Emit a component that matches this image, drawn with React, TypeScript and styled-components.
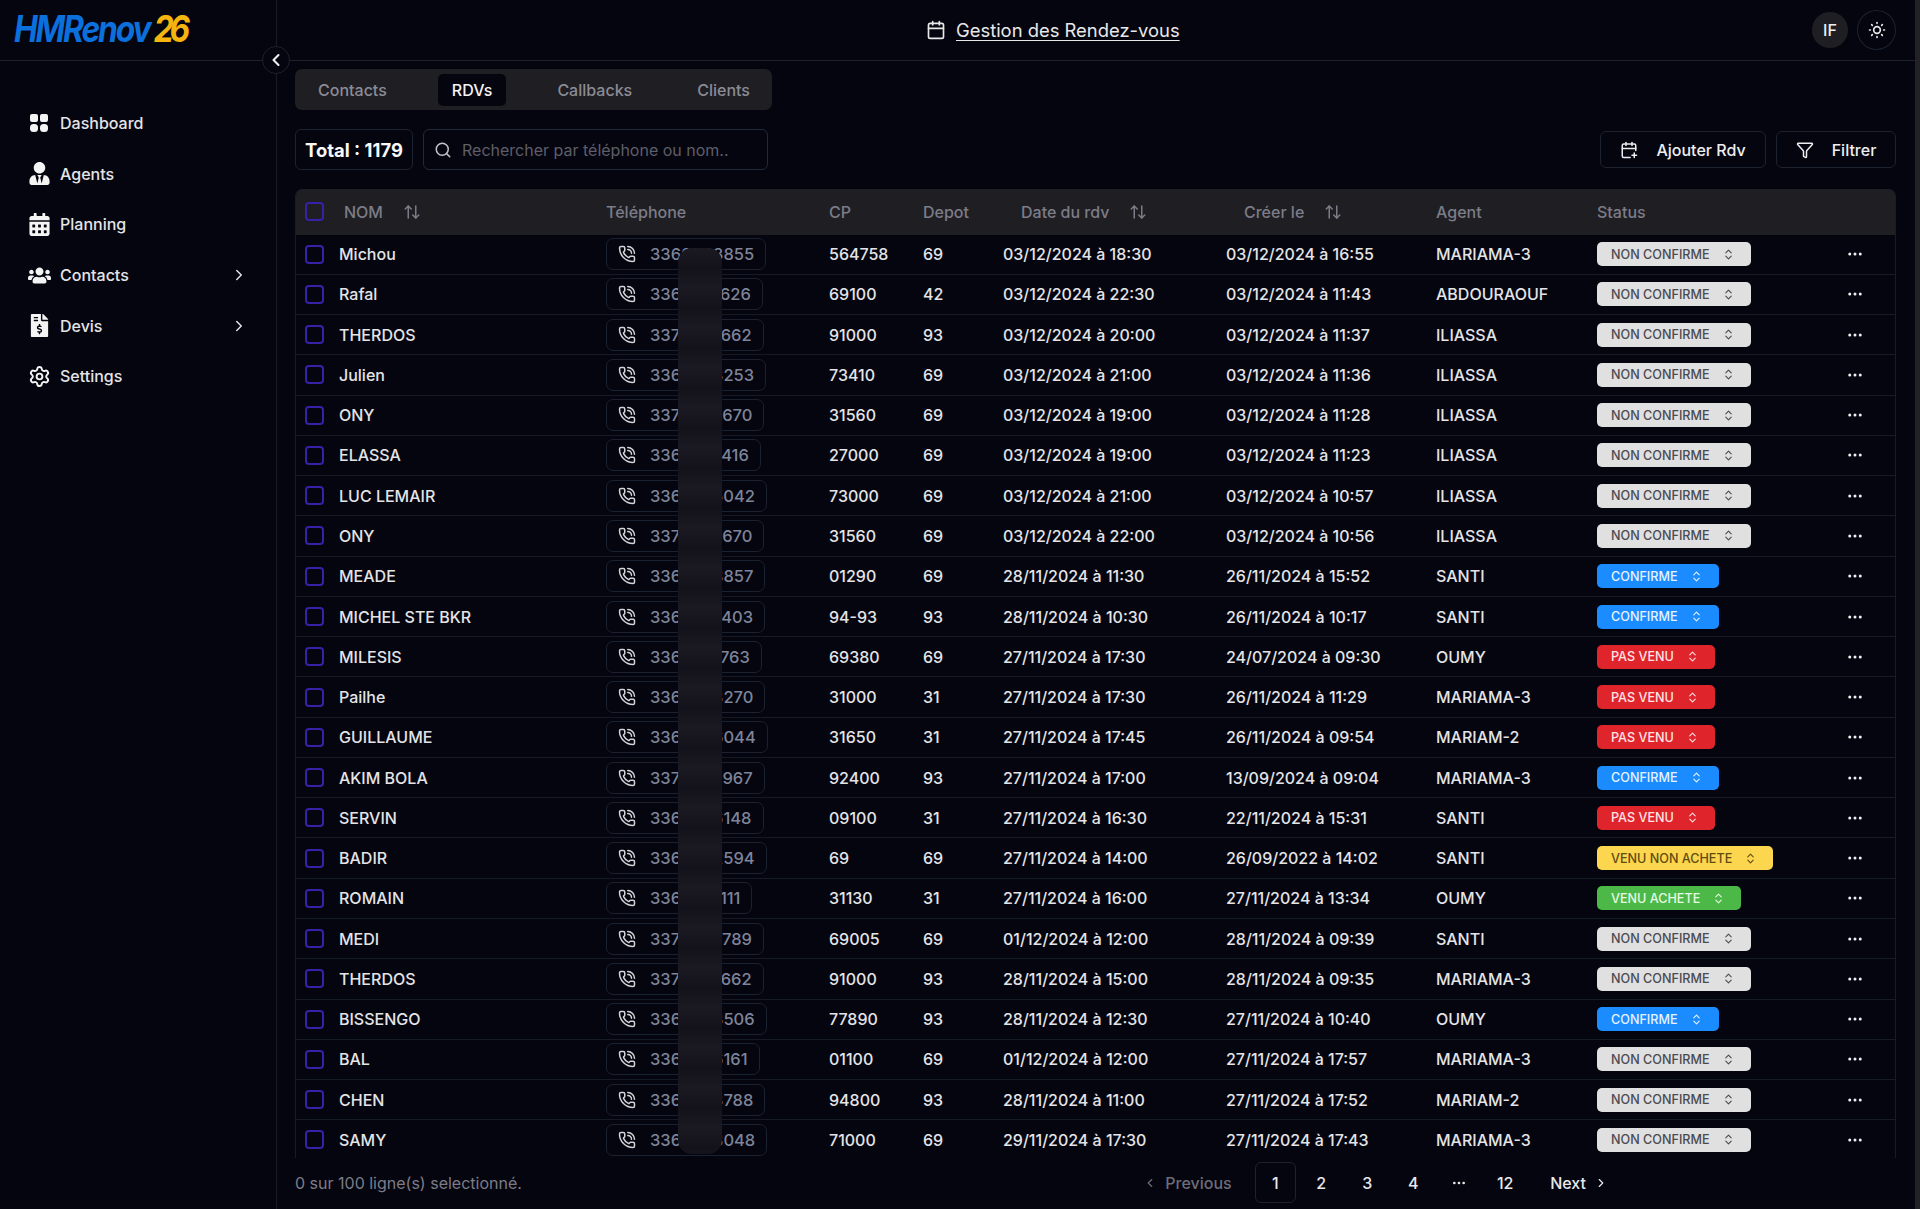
import React from "react";
import styled, { createGlobalStyle } from "styled-components";
import {
  ArrowUpDown,
  Calendar,
  CalendarPlus,
  ChevronLeft,
  ChevronRight,
  ChevronsUpDown,
  Ellipsis,
  Funnel,
  PhoneCall,
  Search,
  Settings,
  SunMedium,
} from "lucide-react";
import { FaCalendarAlt, FaFileInvoiceDollar, FaUsers, FaUserTie } from "react-icons/fa";

const GlobalStyle = createGlobalStyle`
  html, body { margin: 0; padding: 0; height: 100%; background: #05050f; }
  body { font-family: Inter, "Liberation Sans", sans-serif; color: #e4e4e7; overflow: hidden; }
  * { box-sizing: border-box; }
`;

const Shell = styled.div`
  display: flex;
  height: 100vh;
  position: relative;
`;

const Sidebar = styled.aside`
  width: 277px;
  flex-shrink: 0;
  border-right: 1px solid #171c28;
  display: flex;
  flex-direction: column;
`;

const LogoBar = styled.div`
  height: 61px;
  border-bottom: 1px solid #1c2230;
  padding: 7px 0 0 14px;
  line-height: 44px;
`;

const Logo = styled.div`
  display: inline-block;
  white-space: nowrap;
  font-size: 37px;
  font-weight: 700;
  font-style: italic;
  letter-spacing: -2.5px;
  transform: scaleX(0.86);
  transform-origin: left center;
`;

const LogoBlue = styled.span`
  color: #0b6fdc;
`;

const LogoYellow = styled.span`
  color: #f6b40e;
  margin-left: 5px;
  letter-spacing: -5px;
`;

const Collapse = styled.button`
  position: absolute;
  left: 262px;
  top: 46px;
  width: 28px;
  height: 28px;
  border-radius: 50%;
  border: 1px solid #1c2230;
  background: #05050f;
  color: #f0f0f2;
  display: flex;
  align-items: center;
  justify-content: center;
  padding: 0;
`;

const Nav = styled.nav`
  display: flex;
  flex-direction: column;
  gap: 14.7px;
  padding: 44px 0 0 24px;
`;

const NavItem = styled.a`
  height: 36px;
  display: flex;
  align-items: center;
  color: #e4e4e7;
  font-size: 16px;
  font-weight: 500;
  padding-right: 28px;
`;

const NavIcon = styled.span`
  width: 30px;
  margin-right: 6px;
  flex-shrink: 0;
  display: flex;
  align-items: center;
  justify-content: center;
  color: #f4f4f5;
`;

const NavLabel = styled.span`
  flex: 1;
`;

const Main = styled.main`
  flex: 1;
  min-width: 0;
  display: flex;
  flex-direction: column;
`;

const Header = styled.header`
  height: 61px;
  flex-shrink: 0;
  border-bottom: 1px solid #1c2230;
  display: flex;
  align-items: center;
  padding: 0 19px 0 649px;
`;

const Title = styled.div`
  display: flex;
  align-items: center;
  gap: 10px;
  font-size: 18.4px;
  color: #e8e8ea;
  flex: 1;
`;

const TitleLink = styled.span`
  text-decoration: underline;
  text-underline-offset: 3px;
`;

const Avatar = styled.div`
  width: 36px;
  height: 36px;
  border-radius: 50%;
  background: #1f1f23;
  display: flex;
  align-items: center;
  justify-content: center;
  font-size: 16px;
  font-weight: 500;
  color: #f0f0f2;
  margin-right: 9px;
`;

const ThemeButton = styled.button`
  width: 39px;
  height: 40px;
  border-radius: 50%;
  border: 1px solid #1c2230;
  background: transparent;
  color: #e8e8ea;
  display: flex;
  align-items: center;
  justify-content: center;
  padding: 0;
`;

const Content = styled.div`
  flex: 1;
  min-height: 0;
  display: flex;
  flex-direction: column;
  padding: 8px 19px 0 18px;
`;

const Tabs = styled.div`
  width: 477px;
  height: 41px;
  flex-shrink: 0;
  background: #1f1f23;
  border-radius: 7px;
  display: flex;
  align-items: center;
  gap: 37px;
  padding: 0 9px;
`;

const Tab = styled.div<{ $active?: boolean }>`
  height: 32px;
  padding: 0 14px;
  border-radius: 5px;
  display: flex;
  align-items: center;
  font-size: 16px;
  font-weight: 500;
  color: ${({ $active }) => ($active ? "#f4f4f5" : "#8b8b96")};
  background: ${({ $active }) => ($active ? "#05050f" : "transparent")};
`;

const Toolbar = styled.div`
  display: flex;
  align-items: center;
  flex-shrink: 0;
  height: 41px;
  margin: 19px 0;
`;

const TotalBox = styled.div`
  width: 118px;
  height: 41px;
  border: 1px solid #1c2230;
  border-radius: 6px;
  display: flex;
  align-items: center;
  justify-content: center;
  font-size: 18.4px;
  font-weight: 700;
  color: #f8f8f9;
  margin-right: 10px;
`;

const SearchBox = styled.div`
  width: 345px;
  height: 41px;
  border: 1.5px solid #1f2a3a;
  border-radius: 6px;
  display: flex;
  align-items: center;
  gap: 10px;
  padding-left: 10px;
  font-size: 16px;
  color: #5e5e68;
`;

const SearchIcon = styled(Search)`
  color: #c4c4c8;
  flex-shrink: 0;
`;

const ToolButton = styled.button<{ $width: number }>`
  width: ${({ $width }) => $width}px;
  height: 37px;
  border: 1px solid #1c2230;
  border-radius: 6px;
  background: transparent;
  color: #eeeef0;
  display: flex;
  align-items: center;
  justify-content: center;
  gap: 18px;
  font-family: inherit;
  font-size: 16px;
  font-weight: 500;
  margin-left: 10px;
  padding: 0;
`;

const Spacer = styled.div`
  flex: 1;
`;

const TableWrap = styled.div`
  flex: 1;
  min-height: 0;
  position: relative;
  overflow: hidden;
  border-left: 1px solid #171c28;
  border-right: 1px solid #171c28;
  border-radius: 7px 7px 0 0;
`;

const COLUMNS = "43px 267px 223px 94px 80px 223px 210px 161px 240px 1fr";

const HeadRow = styled.div`
  display: grid;
  grid-template-columns: ${COLUMNS};
  align-items: center;
  height: 45.5px;
  background: #1f1f23;
  font-size: 16px;
  font-weight: 500;
  color: #7c7c88;
`;

const HeadCell = styled.div<{ $pad?: number }>`
  display: flex;
  align-items: center;
  gap: 20px;
  padding-left: ${({ $pad }) => $pad ?? 0}px;
`;

const Row = styled.div`
  display: grid;
  grid-template-columns: ${COLUMNS};
  align-items: center;
  height: 40.27px;
  border-bottom: 1px solid #141a26;
  font-size: 16px;
  color: #e4e4e7;
  font-weight: 500;
`;

const CheckCell = styled.div`
  padding-left: 9px;
  display: flex;
  align-items: center;
`;

const Check = styled.span`
  width: 19px;
  height: 19px;
  border: 2px solid #3820a8;
  border-radius: 4px;
  display: block;
`;

const PhonePill = styled.div`
  height: 32px;
  width: max-content;
  padding: 0 11px;
  border: 1px solid #1a2130;
  border-radius: 7px;
  display: flex;
  align-items: center;
  gap: 14px;
  font-size: 16.5px;
  color: #7e8499;
  font-weight: 500;
`;

const PhoneIcon = styled(PhoneCall)`
  color: #d4d4d8;
  flex-shrink: 0;
`;

const STATUS_COLORS: Record<string, { bg: string; fg: string }> = {
  "NON CONFIRME": { bg: "#e0e0e0", fg: "#4b4b50" },
  CONFIRME: { bg: "#1a8cff", fg: "#e6f3ff" },
  "PAS VENU": { bg: "#e0242c", fg: "#ffe4e4" },
  "VENU NON ACHETE": { bg: "#fdd64f", fg: "#5e4c10" },
  "VENU ACHETE": { bg: "#4cb848", fg: "#e6fae4" },
};

const StatusPill = styled.div<{ $status: string }>`
  height: 24px;
  width: max-content;
  padding: 0 16px 0 14px;
  border-radius: 5px;
  display: flex;
  align-items: center;
  gap: 12px;
  font-size: 12.6px;
  font-weight: 500;
  background: ${({ $status }) => STATUS_COLORS[$status].bg};
  color: ${({ $status }) => STATUS_COLORS[$status].fg};
`;

const ActionCell = styled.div`
  display: flex;
  padding-left: 9px;
  color: #f0f0f2;
`;

const Blur = styled.div`
  position: absolute;
  left: 382px;
  top: 59px;
  width: 44px;
  height: 906px;
  border-radius: 14px;
  background: repeating-linear-gradient(180deg, #1b1a23 0, #13121a 20px, #1b1a23 40px);
`;

const Footer = styled.footer`
  height: 51px;
  flex-shrink: 0;
  display: flex;
  align-items: center;
  justify-content: space-between;
  padding: 0 288px 2px 0;
  font-size: 16px;
  color: #7c7c88;
`;

const Pagination = styled.div`
  display: flex;
  align-items: center;
  gap: 5px;
  font-weight: 500;
  color: #e8e8ea;
`;

const PrevLink = styled.span`
  display: flex;
  align-items: center;
  gap: 8px;
  margin-right: 18px;
  color: #6d6d78;
`;

const NextLink = styled.span`
  display: flex;
  align-items: center;
  gap: 8px;
  margin-left: 19.5px;
  color: #e8e8ea;
`;

const PageLink = styled.span<{ $active?: boolean }>`
  width: 41px;
  height: 41px;
  display: flex;
  align-items: center;
  justify-content: center;
  border-radius: 6px;
  border: 1px solid ${({ $active }) => ($active ? "#1c2230" : "transparent")};
`;

const ScrollTrack = styled.div`
  width: 5px;
  flex-shrink: 0;
  background: #222226;
`;

const DashboardIcon = () => (
  <svg width="18" height="18" viewBox="0 0 18 18" fill="currentColor">
    <rect x="0" y="0" width="8" height="8" rx="2" />
    <rect x="10" y="0" width="8" height="8" rx="2" />
    <rect x="0" y="10" width="8" height="8" rx="3.5" />
    <rect x="10" y="10" width="8" height="8" rx="3.5" />
  </svg>
);

const NAV = [
  { label: "Dashboard", icon: <DashboardIcon /> },
  { label: "Agents", icon: <FaUserTie size={23} /> },
  { label: "Planning", icon: <FaCalendarAlt size={23} /> },
  { label: "Contacts", icon: <FaUsers size={23} />, more: true },
  { label: "Devis", icon: <FaFileInvoiceDollar size={23} />, more: true },
  { label: "Settings", icon: <Settings size={23} /> },
];

const TABS = ["Contacts", "RDVs", "Callbacks", "Clients"];

const RDVS = [
  ["Michou", "336", "000", "3855", "564758", "69", "03/12/2024 à 18:30", "03/12/2024 à 16:55", "MARIAMA-3", "NON CONFIRME"],
  ["Rafal", "336", "000", "1626", "69100", "42", "03/12/2024 à 22:30", "03/12/2024 à 11:43", "ABDOURAOUF", "NON CONFIRME"],
  ["THERDOS", "337", "000", "7662", "91000", "93", "03/12/2024 à 20:00", "03/12/2024 à 11:37", "ILIASSA", "NON CONFIRME"],
  ["Julien", "336", "000", "3253", "73410", "69", "03/12/2024 à 21:00", "03/12/2024 à 11:36", "ILIASSA", "NON CONFIRME"],
  ["ONY", "337", "000", "8670", "31560", "69", "03/12/2024 à 19:00", "03/12/2024 à 11:28", "ILIASSA", "NON CONFIRME"],
  ["ELASSA", "336", "000", "7416", "27000", "69", "03/12/2024 à 19:00", "03/12/2024 à 11:23", "ILIASSA", "NON CONFIRME"],
  ["LUC LEMAIR", "336", "000", "5042", "73000", "69", "03/12/2024 à 21:00", "03/12/2024 à 10:57", "ILIASSA", "NON CONFIRME"],
  ["ONY", "337", "000", "8670", "31560", "69", "03/12/2024 à 22:00", "03/12/2024 à 10:56", "ILIASSA", "NON CONFIRME"],
  ["MEADE", "336", "000", "8857", "01290", "69", "28/11/2024 à 11:30", "26/11/2024 à 15:52", "SANTI", "CONFIRME"],
  ["MICHEL STE BKR", "336", "000", "7403", "94-93", "93", "28/11/2024 à 10:30", "26/11/2024 à 10:17", "SANTI", "CONFIRME"],
  ["MILESIS", "336", "000", "1763", "69380", "69", "27/11/2024 à 17:30", "24/07/2024 à 09:30", "OUMY", "PAS VENU"],
  ["Pailhe", "336", "000", "3270", "31000", "31", "27/11/2024 à 17:30", "26/11/2024 à 11:29", "MARIAMA-3", "PAS VENU"],
  ["GUILLAUME", "336", "000", "6044", "31650", "31", "27/11/2024 à 17:45", "26/11/2024 à 09:54", "MARIAM-2", "PAS VENU"],
  ["AKIM BOLA", "337", "000", "0967", "92400", "93", "27/11/2024 à 17:00", "13/09/2024 à 09:04", "MARIAMA-3", "CONFIRME"],
  ["SERVIN", "336", "000", "6148", "09100", "31", "27/11/2024 à 16:30", "22/11/2024 à 15:31", "SANTI", "PAS VENU"],
  ["BADIR", "336", "000", "2594", "69", "69", "27/11/2024 à 14:00", "26/09/2022 à 14:02", "SANTI", "VENU NON ACHETE"],
  ["ROMAIN", "336", "000", "1111", "31130", "31", "27/11/2024 à 16:00", "27/11/2024 à 13:34", "OUMY", "VENU ACHETE"],
  ["MEDI", "337", "000", "5789", "69005", "69", "01/12/2024 à 12:00", "28/11/2024 à 09:39", "SANTI", "NON CONFIRME"],
  ["THERDOS", "337", "000", "7662", "91000", "93", "28/11/2024 à 15:00", "28/11/2024 à 09:35", "MARIAMA-3", "NON CONFIRME"],
  ["BISSENGO", "336", "000", "3506", "77890", "93", "28/11/2024 à 12:30", "27/11/2024 à 10:40", "OUMY", "CONFIRME"],
  ["BAL", "336", "000", "6161", "01100", "69", "01/12/2024 à 12:00", "27/11/2024 à 17:57", "MARIAMA-3", "NON CONFIRME"],
  ["CHEN", "336", "000", "3788", "94800", "93", "28/11/2024 à 11:00", "27/11/2024 à 17:52", "MARIAM-2", "NON CONFIRME"],
  ["SAMY", "336", "000", "3048", "71000", "69", "29/11/2024 à 17:30", "27/11/2024 à 17:43", "MARIAMA-3", "NON CONFIRME"],
];

const SortIcon = () => <ArrowUpDown size={18} />;

export default function App() {
  return (
    <Shell>
      <GlobalStyle />
      <Sidebar>
        <LogoBar>
          <Logo>
            <LogoBlue>HMRenov</LogoBlue>
            <LogoYellow>26</LogoYellow>
          </Logo>
        </LogoBar>
        <Nav>
          {NAV.map((item) => (
            <NavItem key={item.label}>
              <NavIcon>{item.icon}</NavIcon>
              <NavLabel>{item.label}</NavLabel>
              {item.more && <ChevronRight size={18} />}
            </NavItem>
          ))}
        </Nav>
      </Sidebar>
      <Collapse>
        <ChevronLeft size={20} strokeWidth={2.5} />
      </Collapse>
      <Main>
        <Header>
          <Title>
            <Calendar size={20} />
            <TitleLink>Gestion des Rendez-vous</TitleLink>
          </Title>
          <Avatar>IF</Avatar>
          <ThemeButton>
            <SunMedium size={20} />
          </ThemeButton>
        </Header>
        <Content>
          <Tabs>
            {TABS.map((tab) => (
              <Tab key={tab} $active={tab === "RDVs"}>
                {tab}
              </Tab>
            ))}
          </Tabs>
          <Toolbar>
            <TotalBox>Total : 1179</TotalBox>
            <SearchBox>
              <SearchIcon size={18} />
              Rechercher par téléphone ou nom..
            </SearchBox>
            <Spacer />
            <ToolButton $width={166}>
              <CalendarPlus size={18} />
              Ajouter Rdv
            </ToolButton>
            <ToolButton $width={120}>
              <Funnel size={18} />
              Filtrer
            </ToolButton>
          </Toolbar>
          <TableWrap>
            <HeadRow>
              <CheckCell>
                <Check />
              </CheckCell>
              <HeadCell $pad={5}>
                NOM <SortIcon />
              </HeadCell>
              <HeadCell>Téléphone</HeadCell>
              <HeadCell>CP</HeadCell>
              <HeadCell>Depot</HeadCell>
              <HeadCell $pad={18}>
                Date du rdv <SortIcon />
              </HeadCell>
              <HeadCell $pad={18}>
                Créer le <SortIcon />
              </HeadCell>
              <HeadCell>Agent</HeadCell>
              <HeadCell>Status</HeadCell>
              <HeadCell />
            </HeadRow>
            {RDVS.map(([name, prefix, hidden, tail, cp, depot, date, created, agent, status], i) => (
              <Row key={i}>
                <CheckCell>
                  <Check />
                </CheckCell>
                <div>{name}</div>
                <PhonePill>
                  <PhoneIcon size={18} />
                  {prefix + hidden + tail}
                </PhonePill>
                <div>{cp}</div>
                <div>{depot}</div>
                <div>{date}</div>
                <div>{created}</div>
                <div>{agent}</div>
                <StatusPill $status={status}>
                  {status}
                  <ChevronsUpDown size={13} />
                </StatusPill>
                <ActionCell>
                  <Ellipsis size={18} />
                </ActionCell>
              </Row>
            ))}
            <Blur />
          </TableWrap>
          <Footer>
            <span>0 sur 100 ligne(s) selectionné.</span>
            <Pagination>
              <PrevLink>
                <ChevronLeft size={14} />
                Previous
              </PrevLink>
              <PageLink $active>1</PageLink>
              <PageLink>2</PageLink>
              <PageLink>3</PageLink>
              <PageLink>4</PageLink>
              <PageLink>
                <Ellipsis size={16} />
              </PageLink>
              <PageLink>12</PageLink>
              <NextLink>
                Next
                <ChevronRight size={14} />
              </NextLink>
            </Pagination>
          </Footer>
        </Content>
      </Main>
      <ScrollTrack />
    </Shell>
  );
}
